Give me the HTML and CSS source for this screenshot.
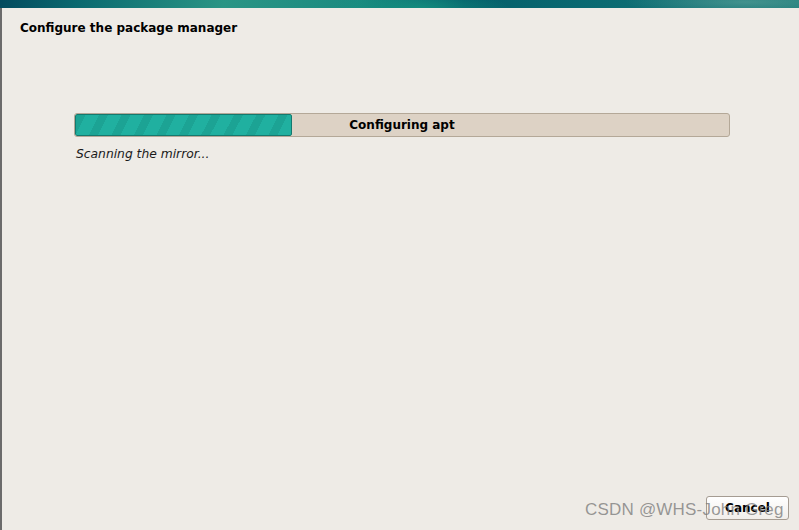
FILE: index.html
```html
<!DOCTYPE html>
<html lang="en">
<head>
  <meta charset="UTF-8" />
  <title>Configure the package manager</title>
  <link rel="stylesheet" href="styles.css">
</head>
<body>

  <div class="banner"></div>

  <div class="window">
    <h1 class="title">Configure the package manager</h1>

    <div class="progress-area">
      <div class="progress">
        <div class="progress-fill" style="width: 33.2%"></div>
        <span class="progress-label">Configuring apt</span>
      </div>
      <p class="status">Scanning the mirror...</p>
    </div>

    <div class="button-row">
      <button class="btn">Cancel</button>
    </div>
  </div>

  <div class="watermark">CSDN @WHS-John Greg</div>

</body>
</html>
```

FILE: styles.css
```css
:root {
  --bg: #eeebe6;
  --text: #000;
  --teal: #20b0a0;
  --teal-dark: #1ca394;
  --track: #ddd2c5;
}

* {
  box-sizing: border-box;
  margin: 0;
  padding: 0;
}

html, body {
  height: 100%;
}

body {
  font-family: 'DejaVu Sans', Verdana, sans-serif;
  background: var(--bg);
  color: var(--text);
  display: flex;
  flex-direction: column;
  height: 530px;
  overflow: hidden;
  position: relative;
}

.banner {
  height: 8px;
  flex: none;
  background:
    radial-gradient(ellipse 120px 14px at 745px 2px, rgba(120, 180, 170, 0.45), transparent),
    radial-gradient(ellipse 90px 16px at 420px 8px, rgba(20, 150, 130, 0.7), transparent),
    linear-gradient(100deg, #034a5e 0%, #0a6a70 10%, #2a9585 28%, #1a8a80 45%, #045e6a 58%, #0a6a72 75%, #1b7a78 100%);
}

.window {
  flex: 1;
  display: flex;
  flex-direction: column;
  border-left: 2px solid #6b6b6b;
  padding: 12px 10px 10px 18px;
}

.title {
  font-size: 12px;
  font-weight: bold;
  line-height: 16px;
}

.progress-area {
  margin: 77px 59px 0 54px;
}

.progress {
  position: relative;
  height: 24px;
  background: var(--track);
  border: 1px solid #b4a898;
  border-radius: 3px;
  display: flex;
  align-items: center;
  justify-content: center;
  overflow: hidden;
}

.progress-fill {
  position: absolute;
  left: 0;
  top: 0;
  bottom: 0;
  border: 1px solid #14796f;
  border-radius: 2px;
  background: repeating-linear-gradient(
    -63deg,
    var(--teal) 0px,
    var(--teal) 12px,
    var(--teal-dark) 12px,
    var(--teal-dark) 20px
  );
}

.progress-label {
  position: relative;
  font-size: 12px;
  font-weight: bold;
}

.status {
  margin-top: 10px;
  margin-left: 2px;
  font-size: 12.3px;
  font-style: italic;
  color: #1a1a1a;
}

.button-row {
  margin-top: auto;
  display: flex;
  justify-content: flex-end;
}

.btn {
  width: 83px;
  height: 24px;
  font-family: 'DejaVu Sans', Verdana, sans-serif;
  font-size: 12px;
  font-weight: bold;
  background: linear-gradient(#ffffff, #f1eeea);
  border: 1px solid #a59c92;
  border-radius: 3px;
  color: #000;
}

.watermark {
  position: absolute;
  left: 585px;
  top: 500px;
  font-family: 'Liberation Sans', Arial, sans-serif;
  font-size: 17px;
  color: rgba(120, 120, 120, 0.75);
  letter-spacing: 0.2px;
  pointer-events: none;
}
```
